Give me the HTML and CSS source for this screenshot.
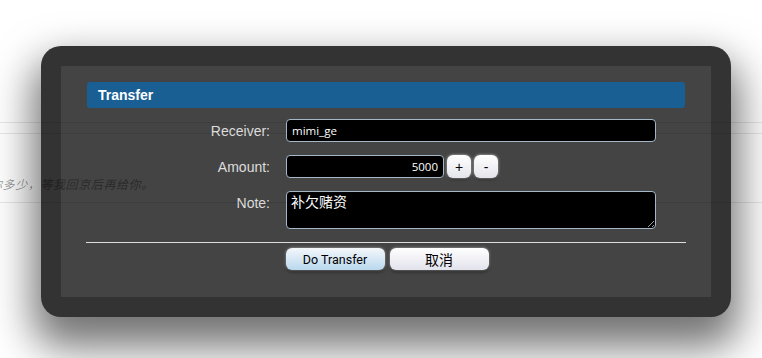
FILE: index.html
```html
<!doctype html>
<html lang="en">
<head>
    <meta charset="UTF-8">
    <title>Transfer</title>
    <link rel="stylesheet" href="styles.css">
</head>
<body>
    <div class="page">
        <div class="row row-thin"></div>
        <div class="row row-msg"><p class="msg">你多少，等我回京后再给你。</p></div>
    </div>

    <div class="dialog">
        <div class="dialog-inner">
            <h2 class="dialog-title">Transfer</h2>
            <form action="" class="transfer-form">
                <label class="field-label" for="receiver">Receiver:</label>
                <div class="field"><input type="text" id="receiver" class="text-input" value="mimi_ge"></div>

                <label class="field-label" for="amount">Amount:</label>
                <div class="field field-amount">
                    <input type="text" id="amount" class="text-input amount-input" value="5000">
                    <button type="button" class="step-btn">+</button>
                    <button type="button" class="step-btn">-</button>
                </div>

                <label class="field-label label-note" for="note">Note:</label>
                <div class="field"><textarea id="note" class="text-input note-input">补欠赌资</textarea></div>
            </form>
            <hr class="divider">
            <div class="actions">
                <button type="button" class="btn btn-primary">Do Transfer</button>
                <button type="button" class="btn btn-cancel">取消</button>
            </div>
        </div>
    </div>
</body>
</html>
```

FILE: styles.css
```css
* {
    margin: 0;
    padding: 0;
    box-sizing: border-box;
}

body {
    background: #fff;
    font-family: "Liberation Sans", Arial, sans-serif;
    overflow: hidden;
}

button {
    outline: none;
    border: none;
    cursor: pointer;
}

.page {
    position: relative;
    z-index: 2;
    padding-top: 122px;
    pointer-events: none;
}

.row {
    border-top: 1px solid rgba(0, 0, 0, 0.09);
}

.row-thin {
    height: 11px;
}

.row-msg {
    height: 70px;
    padding-top: 41px;
    border-bottom: 1px solid rgba(0, 0, 0, 0.09);
}

.msg {
    margin-left: -10px;
    font: italic 12px "Noto Sans CJK SC", sans-serif;
    color: rgba(0, 0, 0, 0.42);
    letter-spacing: 0.6px;
}

/* dialog */
.dialog {
    position: absolute;
    z-index: 1;
    left: 41px;
    top: 46px;
    width: 690px;
    height: 271px;
    padding: 20px;
    border-radius: 20px;
    background: #333;
    box-shadow: 0 22px 40px 8px rgba(0, 0, 0, 0.55);
}

.dialog-inner {
    height: 100%;
    padding: 16px 26px 0;
    background: #444;
}

.dialog-title {
    height: 26px;
    padding-left: 11px;
    border-radius: 3px;
    background: #195f94;
    color: #fff;
    font: bold 14px/26px "Liberation Sans", Arial, sans-serif;
}

.transfer-form {
    display: grid;
    grid-template-columns: 183px 1fr;
    column-gap: 16px;
    row-gap: 13px;
    margin-top: 11px;
}

.field-label {
    align-self: center;
    text-align: right;
    color: #ddd;
    font-size: 14px;
}

.label-note {
    align-self: start;
    padding-top: 4px;
}

.field-amount {
    display: flex;
    align-items: center;
    gap: 3px;
}

.text-input {
    display: block;
    width: 370px;
    height: 23px;
    padding: 0 5px;
    border: 1px solid #a3b7c9;
    border-radius: 4px;
    background: #000;
    color: #fff;
    outline: none;
    font: 11.5px "Open Sans", sans-serif;
}

.amount-input {
    width: 158px;
    text-align: right;
}

.note-input {
    height: 38px;
    padding: 1px 4px;
    resize: vertical;
    font: 14px "Noto Sans CJK SC", sans-serif;
    line-height: 16px;
}

.step-btn {
    width: 24px;
    height: 23px;
    border-radius: 6px;
    background: linear-gradient(#fff, #e4e4ec);
    color: #000;
    font: 14px "Liberation Sans", Arial, sans-serif;
    box-shadow: 0 0 3px rgba(255, 255, 255, 0.7), 0 2px 2px rgba(0, 0, 0, 0.5);
}

.divider {
    margin-top: 13px;
    margin-left: -1px;
    width: 600px;
    border: none;
    border-top: 1px solid #ddd;
}

.actions {
    display: flex;
    justify-content: center;
    gap: 5px;
    margin-top: 5px;
    padding-left: 2px;
}

.btn {
    width: 99px;
    height: 22px;
    border-radius: 6px;
    color: #000;
    font: 12.5px "Roboto", sans-serif;
    box-shadow: 0 0 3px rgba(255, 255, 255, 0.6), 0 2px 3px rgba(0, 0, 0, 0.6);
}

.btn-primary {
    background: linear-gradient(#f4f7fa, #b9d8ee);
}

.btn-cancel {
    background: linear-gradient(#fff, #e2e2ec);
    font: 14px "Noto Sans CJK SC", sans-serif;
}
```
